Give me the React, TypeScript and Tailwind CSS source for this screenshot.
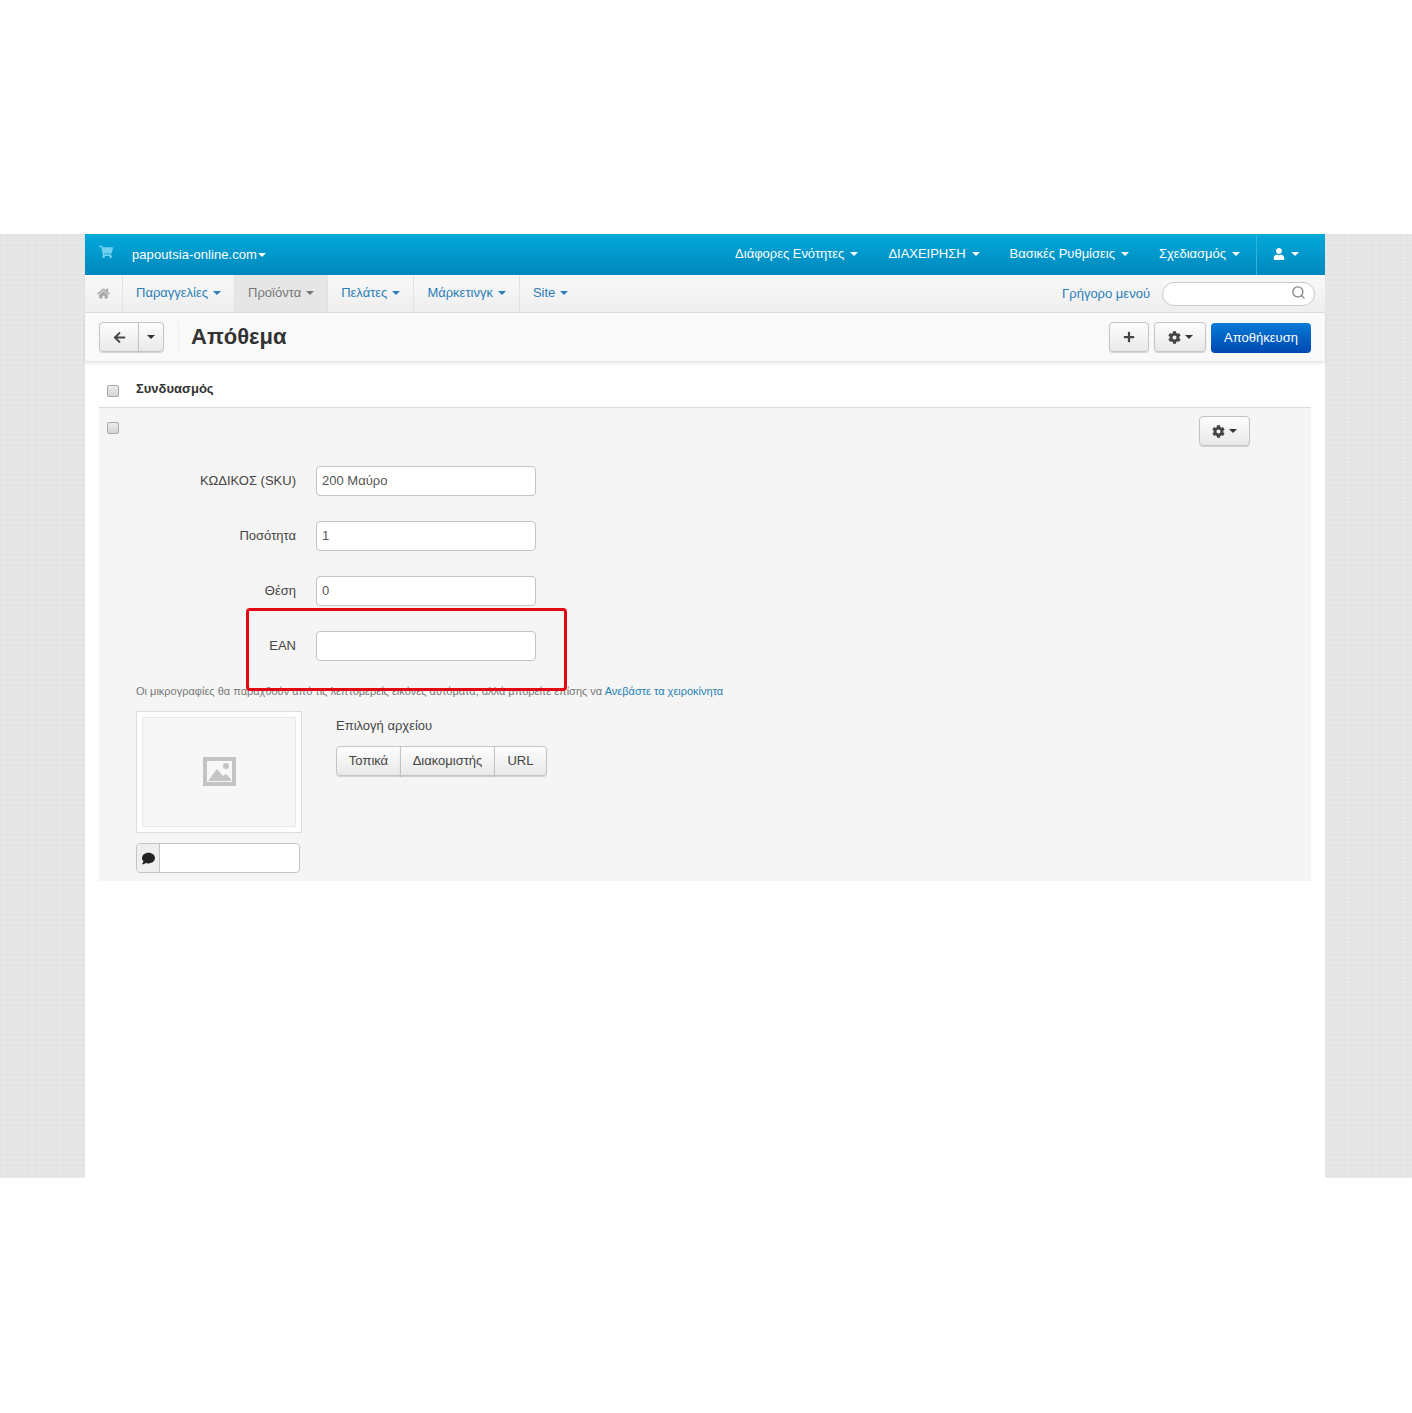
import React from 'react';
import { FaShoppingCart, FaHome, FaArrowLeft, FaPlus, FaCog, FaUser, FaComment } from 'react-icons/fa';
import { Search } from 'lucide-react';

const Caret = ({ className = 'border-t-current' }: { className?: string }) => (
  <span className={`inline-block w-0 h-0 border-x-[4px] border-x-transparent border-t-[4px] ${className}`} />
);

const btn =
  'flex items-center justify-center h-[30px] border border-[#c4c4c4] bg-gradient-to-b from-[#fdfdfd] to-[#e9e9e9] text-[#444] shadow-[0_1px_1px_rgba(0,0,0,0.15)]';

const topLinks = [
  { label: 'Διάφορες Ενότητες' },
  { label: 'ΔΙΑΧΕΙΡΗΣΗ' },
  { label: 'Βασικές Ρυθμίσεις' },
  { label: 'Σχεδιασμός' },
];

const subLinks = [
  { label: 'Παραγγελίες', active: false },
  { label: 'Προϊόντα', active: true },
  { label: 'Πελάτες', active: false },
  { label: 'Μάρκετινγκ', active: false },
];

const fields = [
  { label: 'ΚΩΔΙΚΟΣ (SKU)', value: '200 Μαύρο' },
  { label: 'Ποσότητα', value: '1' },
  { label: 'Θέση', value: '0' },
  { label: 'EAN', value: '' },
];

const Check = () => (
  <span className="block w-[12px] h-[12px] rounded-[2px] border border-[#a9a9a9] bg-gradient-to-b from-[#ececec] to-[#d6d6d6]" />
);

export default function App() {
  return (
    <div className="relative h-[1413px] bg-white font-['Liberation_Sans',Arial,sans-serif] text-[13px] text-[#444] overflow-hidden">
      <div className="h-[234px]" />
      <div className="h-[944px] flex justify-center pr-[2px] bg-[#e5e5e5] bg-[repeating-linear-gradient(0deg,rgba(255,255,255,0.16)_0px,rgba(255,255,255,0.16)_1px,transparent_1px,transparent_5px),repeating-linear-gradient(90deg,rgba(0,0,0,0.018)_0px,rgba(0,0,0,0.018)_1px,transparent_1px,transparent_7px)]">
        <div className="w-[1240px] bg-white">
          {/* top bar */}
          <div className="h-[41px] flex items-center bg-gradient-to-b from-[#04a9d9] to-[#0087bd] text-white">
            <FaShoppingCart size={14} className="ml-[14px] mb-[6px] text-[#6fd0ee]" />
            <span className="ml-[19px] tracking-[0.07px]">papoutsia-online.com</span>
            <Caret className="ml-[1px] border-t-white" />
            <div className="ml-auto flex items-center h-full">
              {topLinks.map((l) => (
                <div key={l.label} className="flex items-center px-[15px] pb-[2px] tracking-[-0.02px]">
                  {l.label}
                  <Caret className="ml-[6px] border-t-white" />
                </div>
              ))}
              <div className="h-full ml-[1px] w-[69px] border-l border-[#2fb4dc] flex items-center pl-[16px] pb-[2px]">
                <FaUser size={12} />
                <Caret className="ml-[6px] border-t-white" />
              </div>
            </div>
          </div>

          {/* sub nav */}
          <div className="h-[38px] flex items-stretch bg-gradient-to-b from-[#f9f9f9] to-[#eeeeee] border-b border-[#dcdcdc]">
            <div className="w-[38px] flex items-center justify-center border-r border-[#e2e2e2] text-[#a9a9a9]">
              <FaHome size={13} />
            </div>
            {subLinks.map((l) => (
              <div
                key={l.label}
                className={`flex items-center px-[13px] pb-[1px] border-r border-[#e2e2e2] ${
                  l.active ? 'bg-[#e6e6e6] text-[#777]' : 'text-[#2a7db8]'
                }`}
              >
                {l.label}
                <Caret className={`ml-[5px] ${l.active ? 'border-t-[#777]' : 'border-t-[#2a7db8]'}`} />
              </div>
            ))}
            <div className="flex items-center px-[13px] pb-[1px] text-[#2a7db8]">
              Site
              <Caret className="ml-[5px] border-t-[#2a7db8]" />
            </div>
            <span className="ml-auto self-center text-[#2a7db8]">Γρήγορο μενού</span>
            <div className="self-center ml-[12px] mr-[10px] w-[153px] h-[24px] rounded-full border border-[#c8c8c8] bg-white flex items-center justify-end pr-[8px] pb-[2px] text-[#8a8a8a]">
              <Search size={15} strokeWidth={2.2} />
            </div>
          </div>

          {/* toolbar */}
          <div className="relative h-[48px] flex items-center px-[14px] bg-[#f9f9f9] shadow-[0_2px_3px_rgba(0,0,0,0.12)]">
            <div className="flex">
              <div className={`${btn} w-[40px] rounded-l-[4px]`}>
                <FaArrowLeft size={13} />
              </div>
              <div className={`${btn} w-[26px] -ml-px rounded-r-[4px]`}>
                <Caret className="border-t-[#333]" />
              </div>
            </div>
            <div className="ml-[14px] h-[30px] w-px bg-[#eeeeee]" />
            <h1 className="ml-[12px] text-[22px] font-bold leading-none pb-[1px] text-[#333]">Απόθεμα</h1>
            <div className="ml-auto flex items-center">
              <div className={`${btn} w-[40px] rounded-[4px]`}>
                <FaPlus size={12} />
              </div>
              <div className={`${btn} w-[52px] ml-[5px] rounded-[4px]`}>
                <FaCog size={13} />
                <Caret className="ml-[4px] border-t-[#333]" />
              </div>
              <div className="ml-[5px] w-[100px] h-[30px] mt-[2px] flex items-center justify-center pb-[1px] rounded-[4px] text-white bg-gradient-to-b from-[#0a7ad6] to-[#0148b0]">
                Αποθήκευση
              </div>
            </div>
          </div>

          {/* variant header */}
          <div className="h-[46px] flex items-start pl-[22px]">
            <span className="mt-[24px]"><Check /></span>
            <span className="ml-[17px] mt-[20px] leading-[16px] font-bold text-[#333]">Συνδυασμός</span>
          </div>

          {/* variant panel */}
          <div className="mx-[14px] h-[474px] bg-[#f5f5f5] border-t border-[#dcdcdc]">
            <div className="flex justify-between h-[58px] pl-[8px] pr-[61px]">
              <span className="mt-[14px]"><Check /></span>
              <div className={`${btn} w-[51px] mt-[8px] rounded-[4px]`}>
                <FaCog size={13} />
                <Caret className="ml-[4px] border-t-[#333]" />
              </div>
            </div>
            <div className="flex flex-col gap-[25px]">
              {fields.map((f) => (
                <div key={f.label} className="flex items-center h-[30px]">
                  <label className="w-[197px] text-right pb-[1px]">{f.label}</label>
                  <div className="ml-[20px] w-[220px] h-[30px] rounded-[4px] border border-[#c4c4c4] bg-white px-[5px] flex items-center text-[#555]">
                    {f.value}
                  </div>
                </div>
              ))}
            </div>
            <p className="ml-[37px] mt-[23px] text-[11px] leading-[14px] text-[#777] whitespace-nowrap">
              Οι μικρογραφίες θα παραχθούν από τις λεπτομερείς εικόνες αυτόματα, αλλά μπορείτε επίσης να{' '}
              <span className="text-[#1f7fb5]">Ανεβάστε τα χειροκίνητα</span>
            </p>
            <div className="ml-[37px] mt-[13px] flex">
              <div>
                <div className="w-[166px] h-[122px] p-[5px] bg-white border border-[#dddddd]">
                  <div className="h-full bg-[#f7f7f7] border border-[#e8e8e8] flex items-center justify-center">
                    <svg width="33" height="29" viewBox="0 0 33 29" className="mb-[2px]">
                      <path fillRule="evenodd" fill="#c4c4c4" d="M0 0h33v29H0zM4 4v21h25V4z" />
                      <path fill="#c4c4c4" d="M5 24l9-12 6 7 3-2 5 5v2z" />
                      <circle cx="23" cy="9" r="3" fill="#c4c4c4" />
                    </svg>
                  </div>
                </div>
                <div className="mt-[10px] w-[164px] h-[30px] flex rounded-[4px] border border-[#c4c4c4] bg-white overflow-hidden">
                  <div className="w-[23px] bg-[#eeeeee] border-r border-[#c4c4c4] flex items-center justify-center text-[#222]">
                    <FaComment size={13} />
                  </div>
                </div>
              </div>
              <div className="ml-[34px]">
                <div className="mt-[6px] leading-[18px]">Επιλογή αρχείου</div>
                <div className="mt-[11px] flex">
                  <div className={`${btn} w-[65px] pb-[1px] rounded-l-[4px]`}>Τοπικά</div>
                  <div className={`${btn} w-[95px] pb-[1px] -ml-px`}>Διακομιστής</div>
                  <div className={`${btn} w-[53px] pb-[1px] -ml-px rounded-r-[4px]`}>URL</div>
                </div>
              </div>
            </div>
          </div>
        </div>
      </div>
      <div className="absolute left-[246px] top-[608px] w-[321px] h-[83px] border-[3px] border-[#e30613] rounded-[4px]" />
    </div>
  );
}
